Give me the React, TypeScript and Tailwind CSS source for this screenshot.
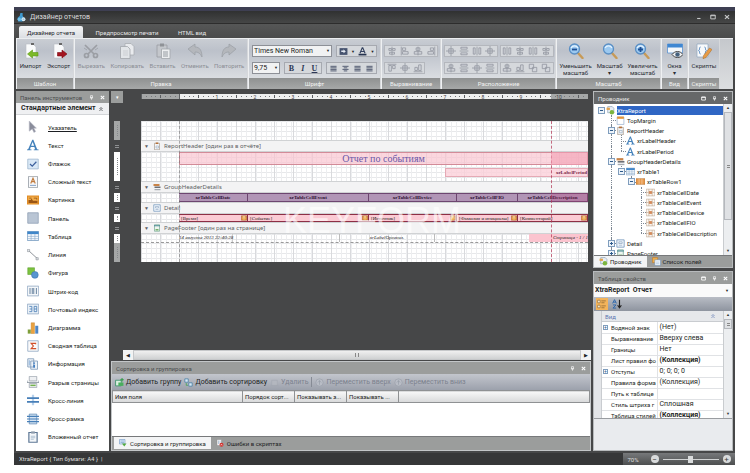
import { useState } from "react";
import type { ReactNode } from "react";
import clsx from "clsx";

type IconProps = { name: string; className?: string };

function Icon({ name, className = "h-4 w-4" }: IconProps) {
  return (
    <svg viewBox="0 0 16 16" className={clsx("shrink-0", className)} aria-hidden="true">
      {icons[name]}
    </svg>
  );
}

const page = <path d="M3 1h7l3 3v11H3z" fill="#fafbfc" stroke="#b9bdc2" strokeWidth=".6" />;
const lens = (
  <>
    <path d="M10 10l4.500 5" stroke="#c79a57" strokeWidth="2.400" strokeLinecap="round" />
    <circle cx="6.500" cy="6" r="5" fill="#9cc9f0" stroke="#5a8fc4" strokeWidth="1.300" />
    <path d="M3 5a4 4 0 0 1 7 0" fill="none" stroke="#e4f3ff" strokeWidth="1.300" />
  </>
);

const icons: Record<string, ReactNode> = {
  app: (
    <>
      <path d="M6 0h4v5l2 3-2 7H2L1 9l4-4z" fill="#3f9ad0" />
      <circle cx="4" cy="11" r="3" fill="#6fc0e8" />
      <circle cx="11.500" cy="11" r="3.500" fill="#d8eaf4" />
      <path d="M10 11h3" stroke="#4a89b0" />
    </>
  ),
  import: (
    <>
      {page}
      <path d="M8 0h3v2H8z" fill="#666" />
      <path d="M4.500 11l5-4v2.500H15v3.500H9.500V15z" fill="#7cb928" stroke="#5d9718" strokeWidth=".6" />
    </>
  ),
  export: (
    <>
      {page}
      <path d="M8 0h3v2H8z" fill="#666" />
      <path d="M16 11l-5-4v2.500H6.500v3.500H11V15z" fill="#a3151f" stroke="#7a0c14" strokeWidth=".6" />
    </>
  ),
  cut: (
    <g fill="none" stroke="#9b9ea4" strokeWidth="1.700">
      <path d="M2 2l9 9M14 2L5 11" />
      <circle cx="3.500" cy="12.500" r="2" />
      <circle cx="12.500" cy="12.500" r="2" />
      <path d="M1 5l3 2M15 5l-3 2" strokeWidth=".8" />
    </g>
  ),
  copy: (
    <>
      <path d="M6 .5h6l3 3V12H6z" fill="#e9ebee" stroke="#a9adb2" strokeWidth=".8" />
      <path d="M1.500 3.500h7l2.500 2.500v9.500h-9.500z" fill="#e2e5e8" stroke="#a2a6ab" strokeWidth=".8" />
      <path d="M4 8h5M4 10h5M4 12h5" stroke="#c3c6ca" strokeWidth=".7" />
    </>
  ),
  paste: (
    <>
      <path d="M2 2h10v12H2z" fill="#c4c7cc" stroke="#9a9da2" strokeWidth=".8" />
      <path d="M5 .5h4v3H5z" fill="#8f9297" />
      <path d="M6.500 6h8.500v9.500H6.500z" fill="#eceef0" stroke="#a2a6ab" strokeWidth=".8" />
      <path d="M8 9h5M8 11h5M8 13h5" stroke="#8d9197" strokeWidth=".9" />
    </>
  ),
  undo: <path d="M1 6l7-5v3c5 0 7 4 7 10-2-4-4-5-7-5v3z" fill="#b4b7bc" stroke="#9a9da3" strokeWidth=".7" />,
  redo: <path d="M15 6L8 1v3C3 4 1 8 1 14c2-4 4-5 7-5v3z" fill="#b4b7bc" stroke="#9a9da3" strokeWidth=".7" />,
  zoomOut: (
    <>
      {lens}
      <path d="M4 6.500h5" stroke="#1d4f94" strokeWidth="1.800" />
    </>
  ),
  zoom: lens,
  zoomIn: (
    <>
      {lens}
      <path d="M4 6.500h5M6.500 4v5" stroke="#1d4f94" strokeWidth="1.800" />
    </>
  ),
  windows: (
    <>
      <path d="M.5 1h15v9H.5z" fill="#f3f7fb" stroke="#5b92cf" strokeWidth=".8" />
      <path d="M.5 1h15v3.500H.5z" fill="#3f87d2" />
      <path d="M5 11.500c3-4 8-4 11 0-3 4-8 4-11 0z" fill="#eef0f2" stroke="#444" strokeWidth="1" />
      <circle cx="10.500" cy="11.500" r="2.200" fill="#45617e" />
    </>
  ),
  scripts: (
    <>
      <path d="M1 1h11v13H1z" fill="#f7f9fb" stroke="#8fa7bf" strokeWidth=".7" />
      <path d="M4.500 4C3 4 4 7 2.700 7.500 4 8 3 11 4.500 11M8.500 4c1.500 0 .5 3 1.800 3.500C9 8 10 11 8.500 11" fill="none" stroke="#3f77b5" strokeWidth=".9" />
      <path d="M13.500 5l2.500 1.500-6 8-3 1.200.4-3z" fill="#e79b46" stroke="#a96d27" strokeWidth=".5" />
    </>
  ),
  pointer: <path d="M3 0l9.500 9.500H9l2.500 4.500-2.300 1.200L7 10.500l-4 3z" fill="#8a8d9b" stroke="#b9bbc6" strokeWidth=".8" />,
  text: <path d="M0 15v-1l1.500-.5L7 1h1.500l5 12.500 2 .5v1H9v-1l1.800-.5-1-3H5l-1 3 2 .5v1zM5.500 9h4L7.500 4z" fill="#4582bb" />,
  check: (
    <>
      <path d="M1 1.500h14v13H1z" fill="#d9e8f6" stroke="#9ab3cc" />
      <path d="M4 8l3 3 5.500-6" fill="none" stroke="#3c5f9c" strokeWidth="1.600" />
    </>
  ),
  rich: (
    <>
      <path d="M2 .5h12v15H2z" fill="#f8f9fb" stroke="#8e959e" />
      <path d="M5 10l3-7 3 7M6 7.500h4" fill="none" stroke="#c07a3c" strokeWidth="1.500" />
      <path d="M4 12.500h8" stroke="#5c86b5" />
    </>
  ),
  picture: (
    <>
      <path d="M0 2h16v12H0z" fill="#e08c26" />
      <path d="M1.500 3.500h13v9h-13z" fill="#f3ad4a" />
      <path d="M2 8h3l1-2 2 3h6v3H2z" fill="#9a5514" />
      <path d="M3 5.500h3M9 5.500h4v2" fill="none" stroke="#8e4c10" />
    </>
  ),
  panel: <path d="M1 1h14v14H1z" fill="#b9c5d4" stroke="#8b9cb1" />,
  table: (
    <>
      <path d="M.5 2h15v12H.5z" fill="#f7fafd" stroke="#6f96bd" />
      <path d="M.5 2h15v3.500H.5z" fill="#3f86c9" />
      <path d="M5.500 5v9M10.500 5v9M.5 8.500h15M.5 11.500h15" stroke="#86a8ca" strokeWidth=".8" />
    </>
  ),
  line: (
    <>
      <path d="M2 2l12 11" stroke="#6d737b" />
      <path d="M.5.5h3v3h-3zM12 11.500h3v3h-3z" fill="#e3e6ea" stroke="#80868e" strokeWidth=".7" />
    </>
  ),
  shape: (
    <>
      <path d="M1 1h9v9H1z" fill="#7cc23f" stroke="#58992a" strokeWidth=".7" />
      <circle cx="10.500" cy="10.500" r="4.500" fill="#5895cf" stroke="#3a72aa" strokeWidth=".7" />
    </>
  ),
  barcode: (
    <>
      <path d="M.5 1.500h15v13H.5z" fill="#f4f7fa" stroke="#8aa3bf" />
      <path d="M4 4v8M7 4v8M9 4v8M12.500 4v8" stroke="#5a7796" strokeWidth="1.200" />
    </>
  ),
  zip: (
    <>
      <path d="M.5 1.500h15v13H.5z" fill="#eaf1f8" stroke="#8aa3bf" />
      <path d="M3 4.500h3.500v7H3M3.500 8h3M9.500 4.500H13v7H9.500zM9.500 8H13" fill="none" stroke="#4a7db5" strokeWidth="1.100" />
    </>
  ),
  chart: (
    <>
      <path d="M1 10h4v5.500H1z" fill="#7e9e3a" />
      <path d="M5.500 1h4.500v14.500H5.500z" fill="#eaa240" stroke="#bd7a20" strokeWidth=".5" />
      <path d="M11 5h4v10.500h-4z" fill="#4f86c4" />
    </>
  ),
  pivot: (
    <>
      <path d="M1 1h14v14H1z" fill="#fafafa" stroke="#8aa3bf" />
      <path d="M11.500 5.500v-1h-6L8.500 8l-3 3.500h6v-1" fill="none" stroke="#d2502a" strokeWidth="1.500" />
    </>
  ),
  info: (
    <>
      <path d="M1 1h8v11H1zM5 4h9v11H5z" fill="#eef3f8" stroke="#7593b3" />
      <path d="M9.500 6v1.500M9.500 9v4" stroke="#2f72bd" strokeWidth="2" />
      <path d="M3 3v7" stroke="#6a9bd0" />
    </>
  ),
  pageBreak: (
    <>
      <path d="M3 .5h10v6H3zM3 10h10v5.500H3z" fill="#eef0f3" stroke="#9ba3ac" />
      <path d="M0 6v2.500h16V6" fill="none" stroke="#6a7785" />
      <path d="M4.500 12.500h7" stroke="#73b24c" strokeWidth="2" />
    </>
  ),
  crossLine: (
    <>
      <path d="M6.500 1h3v14h-3z" fill="#b8d2ec" />
      <path d="M0 5.500h16M0 10.500h16" stroke="#477fb8" strokeWidth="2.200" />
    </>
  ),
  crossBox: (
    <>
      <path d="M3 1.500h10v13H3z" fill="#d6e4f2" stroke="#5c88b4" />
      <path d="M0 4.500h16M0 8h16M0 11.500h16" stroke="#477fb8" strokeWidth="1.600" />
    </>
  ),
  subreport: (
    <>
      <path d="M2.500 2h11v13h-11z" fill="#f4f7fa" stroke="#5d7795" strokeWidth="1.600" />
      <path d="M5.500.5h5v3h-5z" fill="#8e9cac" />
      <path d="M5 7h6M5 9h6M5 11h4" stroke="#9db1c6" />
    </>
  ),
  band: (
    <>
      <path d="M3 2.500h10v13H3z" fill="#f3f5f7" stroke="#8d7a66" />
      <path d="M5.500 1h5v3h-5z" fill="#b56f37" />
      <path d="M6 8h5v4H6z" fill="none" stroke="#8aa0b8" />
    </>
  ),
  group: (
    <>
      <path d="M1 2h12v4H1z" fill="#c98347" />
      <path d="M3 7h12v3H3z" fill="#6c6f74" />
      <path d="M3 12h12v2.500H3z" fill="#a5aab1" />
    </>
  ),
  detail: (
    <>
      <path d="M1.500 1.500h13v13h-13z" fill="#f3f8fd" stroke="#6f93ba" strokeWidth="1.400" />
      <path d="M5 5h6v3H5zM5 11h6" fill="none" stroke="#7593b3" />
    </>
  ),
  footer: (
    <>
      <path d="M3 1.500h10v13H3z" fill="#eef5f0" stroke="#5f9a84" strokeWidth="1.200" />
      <path d="M2 3.500h12" stroke="#4a8b94" strokeWidth="2" />
      <path d="M5 10h6v3H5z" fill="#77b06c" />
    </>
  ),
  margin: (
    <>
      <path d="M2 2h12v13H2z" fill="#fff" stroke="#7d9cc0" />
      <path d="M2 1h12v4H2z" fill="#e39339" />
    </>
  ),
  row: (
    <>
      <path d="M0 3h16v10H0z" fill="#e89b4f" stroke="#b16b27" />
      <path d="M5.500 3v10M10.500 3v10" stroke="#fbe1c2" />
    </>
  ),
  cell: (
    <>
      <path d="M.5 2h15v12H.5z" fill="#fbf6f1" stroke="#b9a18a" />
      <path d="M5 5.500h6v5H5z" fill="#d58a5a" />
      <path d="M.5 8h4M11.500 8h4M5 2v12M11 2v12" stroke="#b9a18a" />
    </>
  ),
  report: (
    <>
      <path d="M3 1h8l3 3v8H3z" fill="#e8eef5" stroke="#7892ad" />
      <path d="M1 3h6v4H1z" fill="#e2a34c" />
      <circle cx="10.500" cy="11" r="4" fill="#7cb53e" />
    </>
  ),
  fields: (
    <>
      <path d="M1 1h9v9H1z" fill="#f0b04c" stroke="#c07a20" />
      <path d="M5 5h10v10H5z" fill="#f7fafd" stroke="#6f93ba" />
      <path d="M7 9h6M7 12h6" stroke="#86a8ca" />
    </>
  ),
  addGroup: (
    <>
      <path d="M1 4h10v10H1z" fill="#d9f0e0" stroke="#3b8f6a" strokeWidth="1.500" />
      <path d="M6 8h9v6H6z" fill="#49ae5e" />
      <path d="M12.500 0v6M9.500 3h6" stroke="#2f9a44" strokeWidth="1.800" />
    </>
  ),
  addSort: (
    <>
      <path d="M1.500 1.500h6v6h-6zM8.500 8.500h6v6h-6z" fill="#d6e9f6" stroke="#3f789f" strokeWidth="1.300" />
      <path d="M4 9v4h3" fill="none" stroke="#48a658" strokeWidth="1.500" />
    </>
  ),
  remove: <path d="M3 4h10v9H3zM1 14h14" fill="#b3b7bf" stroke="#a2a7b0" />,
  circle: (
    <>
      <circle cx="8" cy="8" r="6.500" fill="#b9bdc6" stroke="#989da7" />
      <path d="M8 4v8M5 8l3-3 3 3" fill="none" stroke="#8f95a0" />
    </>
  ),
  sortTab: (
    <>
      <path d="M1 1h11v9H1z" fill="#d8e8f8" stroke="#5a87b8" />
      <path d="M3 4h7M3 7h7" stroke="#5a87b8" />
      <path d="M6 9h9l-4.500 6z" fill="#52aa3e" />
    </>
  ),
  errorTab: (
    <>
      <path d="M2 1h9v12H2z" fill="#f7f7f7" stroke="#8d8d8d" />
      <path d="M5 3v7M8 3v7" stroke="#7c9cc0" />
      <circle cx="11" cy="11.500" r="4" fill="#d2322d" />
      <path d="M9.500 10l3 3M12.500 10l-3 3" stroke="#fff" />
    </>
  ),
  categories: (
    <>
      <path d="M1 2h4v4H1zM1 10h4v4H1z" fill="#fdf3dc" stroke="#8a6532" />
      <path d="M7 3h7M7 6h5M7 11h7M7 14h5" stroke="#8a6532" strokeWidth="1.200" />
    </>
  ),
  sortAz: (
    <>
      <path d="M1 7l3-6 3 6M2 5h4M1.500 9.500h5l-5 5h5" fill="none" stroke="#2c66ad" strokeWidth="1.500" />
      <path d="M12 1v12M9 10l3 4 3-4" fill="none" stroke="#222" strokeWidth="1.800" />
    </>
  ),
  db: (
    <>
      <path d="M1 2h14v12H1z" fill="#d88a35" stroke="#8b4a18" />
      <ellipse cx="8" cy="5" rx="4.500" ry="2" fill="#fbe3b4" />
      <path d="M3.500 7v4c2 2 7 2 9 0V7" fill="#f0b765" />
    </>
  ),
  fill: (
    <>
      <path d="M1 2h14v12H1z" fill="#46536f" />
      <path d="M4 9V6h4V4l4 4-4 3V9z" fill="#e4e9f2" />
    </>
  ),
  fontColor: (
    <>
      <path d="M3.500 11L7.500 1.500h1l4 9.500M5 8h6" fill="none" stroke="#33415f" strokeWidth="2" />
      <path d="M1 13.500h14" stroke="#26334f" strokeWidth="3" />
    </>
  ),
  lines: <path d="M1 3h14M1 6.500h14M1 10h14M1 13.500h14" stroke="#3c4660" strokeWidth="1.900" />,
  linesCenter: <path d="M1 3h14M4 6.500h8M1 10h14M4 13.500h8" stroke="#3c4660" strokeWidth="1.900" />,
  alignA: <path d="M8 1v14M3 4h4v3H3zM9 4h4v3H9zM4 10h8v3H4z" fill="none" stroke="#9396a0" strokeWidth="1.300" />,
  alignB: <path d="M2 1v14M4 3h5v4H4zM4 9h9v4H4z" fill="#d3d6dc" stroke="#9396a0" strokeWidth="1.300" />,
  alignC: <path d="M8 1v14M5 3h6v4H5zM2 9h12v4H2z" fill="#d3d6dc" stroke="#9396a0" strokeWidth="1.300" />,
  alignD: <path d="M14 1v14M7 3h5v4H7zM3 9h9v4H3z" fill="#d3d6dc" stroke="#9396a0" strokeWidth="1.300" />,
  alignTop: <path d="M1 2h14M3 4h4v9H3zM9 4h4v5H9z" fill="#d3d6dc" stroke="#9396a0" strokeWidth="1.300" />,
  alignBottom: <path d="M1 14h14M3 7h4v5H3zM9 3h4v9H9z" fill="#d3d6dc" stroke="#9396a0" strokeWidth="1.300" />,
  center: <path d="M8 0v16M0 8h16M4.500 4.500h7v7h-7z" fill="#d3d6dc" stroke="#9396a0" strokeWidth="1.300" />,
  spaceH: <path d="M2 3h3v10H2zM11 3h3v10h-3zM8 1v14" fill="#d3d6dc" stroke="#9396a0" strokeWidth="1.300" />,
  spaceV: <path d="M3 2h10v3H3zM3 11h10v3H3zM1 8h14" fill="#d3d6dc" stroke="#9396a0" strokeWidth="1.300" />,
  layers: <path d="M2 2h7v7H2zM7 7h7v7H7z" fill="#d3d6dc" stroke="#9396a0" strokeWidth="1.300" />,
  pin: <path d="M5 2h6v7H5zM3 9h10M8 9v6" fill="none" stroke="currentColor" strokeWidth="2" />,
  close: <path d="M2.500 3l11 10M13.500 3l-11 10" stroke="currentColor" strokeWidth="3.400" />,
  max: <path d="M2 3h12v10H2zM2 4.500h12" fill="none" stroke="currentColor" strokeWidth="2.600" />,
  min: <path d="M3 12h9" stroke="currentColor" strokeWidth="3" />,
  collapse: <path d="M4 8l4-4 4 4M4 13l4-4 4 4" fill="none" stroke="currentColor" strokeWidth="1.800" />,
};

const tools = [
  ["pointer", "Указатель"],
  ["text", "Текст"],
  ["check", "Флажок"],
  ["rich", "Сложный текст"],
  ["picture", "Картинка"],
  ["panel", "Панель"],
  ["table", "Таблица"],
  ["line", "Линия"],
  ["shape", "Фигура"],
  ["barcode", "Штрих-код"],
  ["zip", "Почтовый индекс"],
  ["chart", "Диаграмма"],
  ["pivot", "Сводная таблица"],
  ["info", "Информация"],
  ["pageBreak", "Разрыв страницы"],
  ["crossLine", "Кросс-линия"],
  ["crossBox", "Кросс-рамка"],
  ["subreport", "Вложенный отчет"],
];

// guides: v = line, t = branch, e = last branch, m = minus box, n = last minus box,
// p = plus box, r = root box, s = space
const tree = [
  { guides: "r", icon: "report", label: "XtraReport" },
  { guides: "st", icon: "margin", label: "TopMargin" },
  { guides: "sm", icon: "band", label: "ReportHeader" },
  { guides: "svt", icon: "text", label: "xrLabelHeader" },
  { guides: "sve", icon: "text", label: "xrLabelPeriod" },
  { guides: "sm", icon: "group", label: "GroupHeaderDetails" },
  { guides: "svn", icon: "table", label: "xrTable1" },
  { guides: "svsn", icon: "row", label: "xrTableRow1" },
  { guides: "svsst", icon: "cell", label: "xrTableCellDate" },
  { guides: "svsst", icon: "cell", label: "xrTableCellEvent" },
  { guides: "svsst", icon: "cell", label: "xrTableCellDevice" },
  { guides: "svsst", icon: "cell", label: "xrTableCellFIO" },
  { guides: "svsse", icon: "cell", label: "xrTableCellDescription" },
  { guides: "sp", icon: "detail", label: "Detail" },
  { guides: "sp", icon: "footer", label: "PageFooter" },
];

const properties = [
  { name: "Водяной знак", value: "(Нет)", expand: true },
  { name: "Выравнивание", value: "Вверху слева" },
  { name: "Границы", value: "Нет" },
  { name: "Лист правил фо", value: "(Коллекция)", bold: true },
  { name: "Отступы", value: "0; 0; 0; 0", expand: true },
  { name: "Правила форма", value: "(Коллекция)" },
  { name: "Путь к таблице", value: "" },
  { name: "Стиль штриха г", value: "Сплошная" },
  { name: "Таблица стилей", value: "(Коллекция)", bold: true },
];

function RibbonGroup({ title, className, children }: { title: string; className?: string; children: ReactNode }) {
  return (
    <section className={clsx("flex flex-col border-x border-l-[#eef0f2] border-r-[#d6d8db]", className)}>
      <div className="flex flex-1 justify-around bg-linear-to-b from-[#c9cdd3] via-[#bcc1ca] via-30% to-[#dadde1] pt-1">
        {children}
      </div>
      <h2 className="h-[11px] overflow-hidden bg-linear-to-b from-[#8f9191] to-[#a6a8a8] text-center leading-[11px] text-[#f2f2f2]">
        {title}
      </h2>
    </section>
  );
}

function BigButton({ icon, label, disabled }: { icon: string; label: string; disabled?: boolean }) {
  return (
    <button
      disabled={disabled}
      className={clsx("flex flex-col items-center gap-[3px] text-center leading-[7px]", disabled ? "text-[#8b8e95]" : "text-[#2a2d33]")}
    >
      <Icon name={icon} className="h-4 w-4" />
      <span className="whitespace-pre">{label}</span>
    </button>
  );
}

function IconStrip({ names }: { names: string[] }) {
  return (
    <div className="flex h-3 items-center border border-[#b4b7bd] bg-[#d5d8dc]">
      {names.map((name, i) => (
        <button key={i} aria-label={name} className="flex w-[13px] justify-center">
          <Icon name={name} className="h-2.5 w-2.5" />
        </button>
      ))}
    </div>
  );
}

function Combo({ label, value, className }: { label: string; value: string; className: string }) {
  return (
    <div className={clsx("relative h-3", className)}>
      <select
        aria-label={label}
        className="h-full w-full appearance-none border border-[#8d9097] bg-[#f1f2f3] pl-px text-[7px] leading-[9px]"
      >
        <option>{value}</option>
      </select>
      <span className="pointer-events-none absolute top-px right-0.5 text-[4px]">▼</span>
    </div>
  );
}

function PanelTitle({ title, active, buttons }: { title: string; active?: boolean; buttons: string[] }) {
  return (
    <header
      className={clsx(
        "flex h-3 shrink-0 items-center gap-1.5 px-1",
        active ? "bg-[#666869] text-[#e8e8e8]" : "bg-[#9b9d9c] text-[#4a4c4e]"
      )}
    >
      <h2 className="flex-1 whitespace-nowrap">{title}</h2>
      {buttons.map((b) => (
        <button key={b} aria-label={b} className="text-white">
          <Icon name={b} className="h-[5px] w-[5px]" />
        </button>
      ))}
    </header>
  );
}

function Guide({ kind }: { kind: string }) {
  const boxed = "mnpr".includes(kind);
  const hasLine = !"sr".includes(kind);
  return (
    <span className="relative h-full w-[10px] shrink-0">
      {hasLine && (
        <span
          className={clsx(
            "absolute top-0 left-[5px] border-l border-dotted border-[#7d8894]",
            "en".includes(kind) ? "h-1/2" : "h-full"
          )}
        />
      )}
      {hasLine && kind !== "v" && (
        <span className="absolute top-1/2 left-[5px] w-[5px] border-t border-dotted border-[#7d8894]" />
      )}
      {boxed && (
        <span className="absolute top-[2px] left-[2px] flex h-[7px] w-[7px] items-center justify-center border border-[#7f9dbd] bg-[#eef4fa]">
          <span className="h-px w-[3px] bg-[#2d5b8c]" />
          {kind === "p" && <span className="absolute h-[3px] w-px bg-[#2d5b8c]" />}
        </span>
      )}
    </span>
  );
}

function Scrollbar({ thumb }: { thumb: string }) {
  return (
    <div className="flex w-[9px] shrink-0 flex-col items-center border-l border-[#c9cccf] bg-[#eceef0] text-[4px] leading-[8px] text-[#333]">
      <span>▲</span>
      <div className="w-full flex-1">
        <div className={clsx("flex w-full items-center justify-center border border-[#b5b8bd] bg-[#dfe1e4]", thumb)}>
          <span className="h-[3px] w-[3px] border-y border-[#888]" />
        </div>
      </div>
      <span>▼</span>
    </div>
  );
}

function Ruler() {
  const inches = Array.from({ length: 12 }, (_, i) => i);
  return (
    <div className="h-[5px] overflow-hidden bg-[#eeefef]">
      <svg viewBox="0 0 447 5" className="h-[5px] w-[447px]">
        <path d="M0 0h38v5H0zM410 0h37v5h-37z" fill="#a5a7a7" />
        {inches.map((i) => (
          <g key={i}>
            {[5, 10, 14, 24, 29, 34].map((d) => (
              <path key={d} d={`M${i * 38 + d} 2h1v1h-1z`} fill="#75787b" />
            ))}
            <path d={`M${i * 38 + 19} 1h1v3h-1z`} fill="#5c5f62" />
            {i > 1 ? (
              <text x={i * 38} y="4.500" fontSize="5" textAnchor="middle" fill="#3f4245">
                {i - 1}
              </text>
            ) : (
              <path d={`M${i * 38} 0h1v5h-1z`} fill="#5c5f62" />
            )}
          </g>
        ))}
      </svg>
    </div>
  );
}

function VerticalRuler() {
  const parts = [
    { h: "h-[19px]", bg: "bg-[#a5a7a7]" },
    { h: "h-[12px]", bg: "" },
    { h: "h-[29px]", bg: "bg-white" },
    { h: "h-[12px]", bg: "" },
    { h: "h-[9px]", bg: "bg-white" },
    { h: "h-[12px]", bg: "" },
    { h: "h-[8px]", bg: "bg-white" },
    { h: "h-[12px]", bg: "" },
    { h: "h-[9px]", bg: "bg-white" },
    { h: "h-[19px]", bg: "bg-[#a5a7a7]" },
  ];
  return (
    <div className="mt-[18px] ml-[3px] w-1.5">
      {parts.map((p, i) => (
        <div key={i} className={clsx("flex flex-col items-center justify-evenly", p.h, p.bg)}>
          {p.bg ? (
            <span className="h-3/5 border-l border-dotted border-[#85888b]" />
          ) : (
            <span className="h-[3px] w-1 border-y border-[#8e9092]" />
          )}
        </div>
      ))}
    </div>
  );
}

function Band({ icon, title }: { icon: string; title: string }) {
  return (
    <div className="flex h-3 items-center gap-[3px] border-y border-[#d0d2d4] bg-[#f3f3f4] pl-[3px] font-['Noto_Sans',sans-serif] text-[6px] text-[#5d5f63]">
      <span className="w-1.5 text-[5px]">▼</span>
      <Icon name={icon} className="h-2 w-2" />
      <span className="whitespace-nowrap">{title}</span>
    </div>
  );
}

const grid =
  "bg-white bg-[linear-gradient(to_right,#d9dadd_1px,transparent_1px),linear-gradient(to_right,#edeef0_1px,transparent_1px),linear-gradient(to_bottom,#e7e8ea_1px,transparent_1px)] bg-[size:19px_19px,5px_5px,5px_5px]";

const cells = [
  { w: "w-[69px]", head: "xrTableCellDate", field: "[Время]" },
  { w: "w-[121px]", head: "xrTableCellEvent", field: "[Событие]" },
  { w: "w-[88px]", head: "xrTableCellDevice", field: "[Источник]" },
  { w: "w-[61px]", head: "xrTableCellFIO", field: "[Фамилия и инициалы]" },
  { w: "flex-1", head: "xrTableCellDescription", field: "[Комментарий]" },
];

function Report() {
  return (
    <div className="relative mt-[22px] overflow-hidden bg-white font-['Liberation_Serif',serif] text-[5px] leading-[7px] text-[#222]">
      <div className={clsx("h-[19px]", grid)} />
      <Band icon="band" title="ReportHeader [один раз в отчёте]" />
      <div className={clsx("flex h-[29px] flex-col items-end gap-[3px] pl-[38px]", grid)}>
        <div className="h-[13px] w-full border border-[#d28b98] bg-[#f9c4d0]/70 text-center text-[10px] leading-[11px] text-[#6a58a8]">
          Отчет по событиям
        </div>
        <div className="h-[9px] w-[143px] border border-[#e5a9b5] bg-[#fbd0d9]/80 text-right font-bold text-[#7a2a48]">
          xrLabelPeriod
        </div>
      </div>
      <Band icon="group" title="GroupHeaderDetails" />
      <div className={clsx("flex h-[9px] pl-[38px]", grid)}>
        {cells.map((c) => (
          <div key={c.head} className={clsx("border-y border-r border-[#6d4670] bg-[#b195b6] text-center font-bold text-[#2a0c2e]", c.w)}>
            {c.head}
          </div>
        ))}
      </div>
      <Band icon="detail" title="Detail" />
      <div className={clsx("flex h-2 pl-[38px]", grid)}>
        {cells.map((c) => (
          <div
            key={c.head}
            className={clsx("flex items-center justify-between border-y border-r border-[#8d2f45] bg-[#fbcbd4] pl-0.5", c.w)}
          >
            <span className="whitespace-nowrap">{c.field}</span>
            <Icon name="db" className="h-1.5 w-1.5" />
          </div>
        ))}
      </div>
      <Band icon="footer" title="PageFooter [один раз на странице]" />
      <div className={clsx("flex h-[9px] justify-between border-b border-dashed border-b-[#999] pl-[38px] italic", grid)}>
        <div className="w-[54px] border-r border-[#ccc] whitespace-nowrap">14 августа 2013 22:40:28</div>
        <div className="ml-[12px] w-[96px] border-x border-[#bbb] text-center">xrLabelОрганиз.</div>
        <div className="w-[59px] bg-[#fbc4cf] text-right">Страница - 1 / 1</div>
      </div>
      <div className={clsx("h-[19px]", grid)} />
      {/* page margins */}
      <div className="absolute inset-y-0 left-[38px] border-l border-dashed border-[#777]/60" />
      <div className="absolute inset-y-0 right-0 w-[37px] border-l border-dashed border-[#b03050]/70" />
      <div className="absolute top-[31px] right-0 h-[13px] w-[37px] bg-[#f3a0b4]/60" />
      <div className="absolute top-[72px] right-0 h-[9px] w-[37px] bg-[#c04078]/25" />
      <div className="absolute top-[80px] left-[142px] font-[Liberation_Sans,sans-serif] text-[36px] leading-10 text-white/60">
        KEYFORM
      </div>
    </div>
  );
}

export default function App() {
  const [tool, setTool] = useState("Указатель");
  const [zoom, setZoom] = useState(50);

  return (
    <div className="h-screen bg-white pt-[7px] pr-[15px] pb-2 pl-[14px] font-[Roboto,sans-serif] text-[6px] leading-[9px] text-[#1d1f23]">
      <div className="flex h-full flex-col overflow-hidden bg-[#464748]">
        <header className="flex h-[17px] shrink-0 items-center gap-1 border-t-4 border-b border-t-[#3e3f52] border-b-[#2d2d2d] bg-linear-to-b from-[#303131] to-[#464747] pr-1 pl-[3px] text-[7px] text-[#dcdcdc]">
          <Icon name="app" className="h-[9px] w-[9px]" />
          <h1 className="flex-1">Дизайнер отчетов</h1>
          <div className="flex gap-2 pr-px text-[#c5c7c8]">
            {["min", "max", "close"].map((b) => (
              <button key={b} aria-label={b}>
                <Icon name={b} className="h-1.5 w-1.5" />
              </button>
            ))}
          </div>
        </header>

        <nav className="flex h-[14px] shrink-0 items-end gap-[12px] bg-linear-to-b from-[#565757] to-[#4a4b4b] pl-[5px] text-[#e6e6e6]">
          <button className="h-3 w-[64px] rounded-t-xs bg-linear-to-b from-[#f4f5f6] to-[#dcdfe3] text-[#24262b]">Дизайнер отчета</button>
          <button className="h-3 w-[64px] whitespace-nowrap">Предпросмотр печати</button>
          <button className="h-3 w-[42px]">HTML вид</button>
        </nav>

        <div className="mx-[2px] flex h-[51px] shrink-0 border-t border-[#eceef0] bg-linear-to-b from-[#c5c8cc] to-[#dcdee0]">
          <RibbonGroup title="Шаблон" className="w-[58px]">
            <BigButton icon="import" label="Импорт" />
            <BigButton icon="export" label="Экспорт" />
          </RibbonGroup>
          <RibbonGroup title="Правка" className="w-[174px]">
            <BigButton icon="cut" label="Вырезать" disabled />
            <BigButton icon="copy" label="Копировать" disabled />
            <BigButton icon="paste" label="Вставить" disabled />
            <BigButton icon="undo" label="Отменить" disabled />
            <BigButton icon="redo" label="Повторить" disabled />
          </RibbonGroup>
          <RibbonGroup title="Шрифт" className="w-[133px]">
            <div className="flex w-full flex-col gap-[5px] px-[3px] pt-0.5">
              <div className="flex gap-1">
                <Combo label="Шрифт" value="Times New Roman" className="w-[80px]" />
                <div className="flex h-3 flex-1 items-center justify-around border border-[#a6a9b0] bg-[#d5d8dc]">
                  <button aria-label="Заливка"><Icon name="fill" className="h-[9px] w-[9px]" /></button>
                  <span className="text-[4px]">▼</span>
                  <button aria-label="Цвет текста"><Icon name="fontColor" className="h-[9px] w-[9px]" /></button>
                  <span className="text-[4px]">▼</span>
                </div>
              </div>
              <div className="flex gap-1">
                <Combo label="Размер" value="9,75" className="w-[28px]" />
                <div className="flex h-3 w-[38px] items-center justify-around border border-[#a6a9b0] bg-[#d5d8dc] font-['Liberation_Serif',serif] text-[8px] font-bold text-[#2c3755]">
                  <button>B</button>
                  <button className="italic">I</button>
                  <button className="underline">U</button>
                </div>
                <div className="flex h-3 flex-1 items-center justify-around border border-[#a6a9b0] bg-[#d5d8dc]">
                  {["lines", "linesCenter", "lines", "lines"].map((n, i) => (
                    <button key={i} aria-label="Выравнивание">
                      <Icon name={n} className="h-[7px] w-[7px]" />
                    </button>
                  ))}
                </div>
              </div>
            </div>
          </RibbonGroup>
          <RibbonGroup title="Выравнивание" className="w-[60px]">
            <div className="flex flex-col items-start gap-[5px] pt-0.5">
              <IconStrip names={["alignA", "alignB", "alignC", "alignD"]} />
              <IconStrip names={["alignTop", "center", "alignBottom"]} />
            </div>
          </RibbonGroup>
          <RibbonGroup title="Расположение" className="w-[115px]">
            <div className="flex flex-col gap-[5px] pt-0.5">
              <div className="flex gap-0.5">
                <IconStrip names={["center", "spaceV", "spaceH", "center"]} />
                <IconStrip names={["spaceH", "alignA", "spaceH", "alignA"]} />
              </div>
              <div className="flex gap-0.5">
                <IconStrip names={["alignC", "spaceV", "center", "spaceV"]} />
                <IconStrip names={["alignC", "alignBottom", "layers", "layers"]} />
              </div>
            </div>
          </RibbonGroup>
          <RibbonGroup title="Масштаб" className="w-[105px]">
            <BigButton icon="zoomOut" label={"Уменьшить\nмасштаб"} />
            <BigButton icon="zoom" label={"Масштаб\n▾"} />
            <BigButton icon="zoomIn" label={"Увеличить\nмасштаб"} />
          </RibbonGroup>
          <RibbonGroup title="Вид" className="w-[27px]">
            <BigButton icon="windows" label={"Окна\n▾"} />
          </RibbonGroup>
          <RibbonGroup title="Скрипты" className="w-[32px]">
            <BigButton icon="scripts" label="Скрипты" />
          </RibbonGroup>
        </div>

        <main className="flex min-h-0 flex-1 gap-0.5 px-[2px] py-0.5">
          <aside className="flex w-[93px] shrink-0 flex-col bg-white">
            <PanelTitle title="Панель инструментов" buttons={["pin", "close"]} />
            <div className="flex h-3 shrink-0 items-center justify-between border-b border-[#d3d5d8] bg-[#eff0f2] px-[5px] text-[7px] font-bold">
              <h3>Стандартные элемент</h3>
              <Icon name="collapse" className="h-1.5 w-1.5" />
            </div>
            <ul className="flex flex-1 flex-col pt-[3px] pb-[5px]">
              {tools.map(([icon, label]) => (
                <li key={label} className="flex flex-1">
                  <button onClick={() => setTool(label)} className="flex w-full items-center gap-[9px] pl-[11px] text-left">
                    <Icon name={icon} className="h-3 w-3" />
                    <span className={clsx(label === tool && "underline")}>{label}</span>
                  </button>
                </li>
              ))}
            </ul>
          </aside>

          <div className="flex min-w-0 flex-1 flex-col">
            <div className="flex min-h-0 flex-1">
              <div className="w-[30px] shrink-0">
                <div className="flex h-3 w-3 items-center justify-center bg-[#9b9d9c] text-[5px] text-white">▾</div>
                <VerticalRuler />
              </div>
              <div className="min-w-0 flex-1 pt-[3px] pr-[3px]">
                <Ruler />
                <Report />
              </div>
            </div>

            <div className="mb-px ml-3 flex h-[10px] shrink-0 items-center bg-[#f2f3f3] text-[5px]">
              <span className="w-2.5 text-center">◀</span>
              <div className="flex h-full flex-1 items-center justify-center border border-[#c6c8ca] bg-linear-to-b from-[#f0f0f0] to-[#cfd1d2]">
                <span className="h-1 w-1 border-x border-[#888]" />
              </div>
              <span className="w-2.5 text-center">▶</span>
            </div>

            <section className="flex h-[90px] shrink-0 flex-col border border-[#c3c6c8] bg-[#9b9d9c]">
              <PanelTitle title="Сортировка и группировка" buttons={["pin", "close"]} />
              <div className="flex h-4 shrink-0 items-center gap-[3px] bg-linear-to-b from-[#c3c6cd] to-[#9ca1ac] px-[3px] text-[7px] whitespace-nowrap">
                <button className="flex items-center gap-0.5"><Icon name="addGroup" className="h-[9px] w-[9px]" />Добавить группу</button>
                <button className="flex items-center gap-0.5"><Icon name="addSort" className="h-[9px] w-[9px]" />Добавить сортировку</button>
                <button disabled className="flex items-center gap-0.5 text-[#7d828e]"><Icon name="remove" className="h-[9px] w-[9px]" />Удалить</button>
                <span className="h-2.5 border-l border-[#868b95]" />
                <button disabled className="flex items-center gap-0.5 text-[#7d828e]"><Icon name="circle" className="h-[9px] w-[9px]" />Переместить вверх</button>
                <button disabled className="flex items-center gap-0.5 text-[#7d828e]"><Icon name="circle" className="h-[9px] w-[9px]" />Переместить вниз</button>
              </div>
              <div className="min-h-0 flex-1 border-b border-[#77797b] bg-white">
                <table className="w-full table-fixed border-collapse text-left">
                  <thead>
                    <tr className="h-3 border border-[#8f9193] bg-linear-to-b from-[#f7f7f7] to-[#d9dadb]">
                      <th className="w-[130px] px-0.5 font-normal">Имя поля</th>
                      <th className="w-[52px] border-l border-[#8f9193] px-0.5 font-normal">Порядок сорт...</th>
                      <th className="w-[52px] border-l border-[#8f9193] px-0.5 font-normal">Показывать з...</th>
                      <th className="w-[52px] border-l border-[#8f9193] px-0.5 font-normal">Показывать ...</th>
                      <th className="border-l border-[#8f9193]" />
                    </tr>
                  </thead>
                </table>
              </div>
              <div className="flex h-[13px] shrink-0 pb-px pl-0.5">
                <button className="flex items-center gap-[3px] bg-[#f3f4f5] px-[5px] whitespace-nowrap"><Icon name="sortTab" className="h-2 w-2" />Сортировка и группировка</button>
                <button className="flex items-center gap-[3px] px-[5px] whitespace-nowrap"><Icon name="errorTab" className="h-2 w-2" />Ошибки в скриптах</button>
              </div>
            </section>
          </div>

          <aside className="flex w-[140px] shrink-0 flex-col gap-[3px]">
            <section className="flex h-[177px] flex-col border border-[#b7babc] bg-[#9b9d9c]">
              <PanelTitle active title="Проводник" buttons={["max", "pin", "close"]} />
              <div className="flex min-h-0 flex-1 bg-white">
                <ul className="min-w-0 flex-1 overflow-hidden pt-px pl-0.5">
                  {tree.map((n, i) => (
                    <li key={n.label} className={clsx("flex items-center", i % 4 === 3 ? "h-[11px]" : "h-[10px]")}>
                      {n.guides.split("").map((g, j) => (
                        <Guide key={j} kind={g} />
                      ))}
                      <Icon name={n.icon} className="h-[9px] w-[9px]" />
                      <span className={clsx("ml-0.5 whitespace-nowrap", i === 0 && "flex-1 bg-[#2f66c4] text-white")}>{n.label}</span>
                    </li>
                  ))}
                </ul>
                <Scrollbar thumb="h-4/5" />
              </div>
              <div className="flex h-3 shrink-0 border-t border-[#77797b]">
                <button className="flex items-center gap-0.5 bg-[#f3f4f5] px-[5px]"><Icon name="report" className="h-[9px] w-[9px]" />Проводник</button>
                <button className="flex items-center gap-0.5 px-[5px]"><Icon name="fields" className="h-[9px] w-[9px]" />Список полей</button>
              </div>
            </section>

            <section className="flex min-h-0 flex-1 flex-col border border-[#b7babc] bg-[#e9ebee]">
              <PanelTitle title="Таблица свойств" buttons={["max", "pin", "close"]} />
              <div className="relative h-[13px] shrink-0">
                <select aria-label="Объект" className="h-full w-full appearance-none bg-[#fafafa] pl-px text-[7px] font-bold">
                  <option>XtraReport&nbsp; Отчет</option>
                </select>
                <span className="pointer-events-none absolute top-0.5 right-[3px] text-[4px]">▼</span>
              </div>
              <div className="flex h-[14px] shrink-0 items-center gap-1 bg-linear-to-b from-[#b9bdc5] to-[#8e949f] px-0.5">
                <button aria-label="По категориям" className="bg-[#f3b45b] p-px"><Icon name="categories" className="h-2.5 w-2.5" /></button>
                <button aria-label="По алфавиту"><Icon name="sortAz" className="h-2.5 w-2.5" /></button>
              </div>
              <div className="flex min-h-0 flex-1 border-b border-[#9a9da1] bg-white">
                <div className="w-2 shrink-0 border-r border-[#c9ccd0] bg-[#e3e5e8]" />
                <div className="min-w-0 flex-1 overflow-hidden text-[7px]">
                  <div className="flex h-[11px] items-center justify-between border-b border-[#c9ccd0] bg-[#e6e8eb] px-[3px] text-[6px] text-[#5a75b0]">
                    <span>Вид</span>
                    <Icon name="collapse" className="mr-1 h-1.5 w-1.5" />
                  </div>
                  <table className="w-full table-fixed border-collapse">
                    <tbody>
                      {properties.map((p) => (
                        <tr key={p.name} className="h-[11px] border-b border-[#e0e2e5]">
                          <th className="w-[55px] border-r border-[#e0e2e5] text-left text-[6px] font-normal whitespace-nowrap">
                            <span className="flex items-center gap-[3px] pl-px">
                              <span className={clsx("flex h-[5px] w-[5px] shrink-0 items-center justify-center text-[5px]", p.expand && "border border-[#7f9dbd] text-[#2d5b8c]")}>
                                {p.expand && "+"}
                              </span>
                              {p.name}
                            </span>
                          </th>
                          <td className={clsx("pl-0.5 whitespace-nowrap", p.bold && "font-bold")}>{p.value}</td>
                        </tr>
                      ))}
                    </tbody>
                  </table>
                </div>
                <Scrollbar thumb="h-2.5" />
              </div>
              <div className="h-[31px] shrink-0" />
            </section>
          </aside>
        </main>

        <footer className="flex h-3 shrink-0 items-stretch justify-between bg-[#363738] text-[#dedede]">
          <span className="pt-px pl-[5px]">XtraReport {"{ Тип бумаги: A4 }"} &nbsp;|</span>
          <label className="flex w-[112px] items-center justify-center gap-1 bg-linear-to-b from-[#77797b] to-[#4d4f50]">
            70%
            <span className="ml-2 flex h-2 w-2 items-center justify-center rounded-full bg-[#d9dbdc] text-[8px] text-[#444]">−</span>
            <input
              type="range"
              value={zoom}
              onChange={(e) => setZoom(Number(e.target.value))}
              className="h-2 w-[56px] appearance-none bg-transparent [&::-webkit-slider-runnable-track]:h-px [&::-webkit-slider-runnable-track]:bg-[#d0d2d3] [&::-webkit-slider-thumb]:-mt-[3px] [&::-webkit-slider-thumb]:h-[7px] [&::-webkit-slider-thumb]:w-[5px] [&::-webkit-slider-thumb]:appearance-none [&::-webkit-slider-thumb]:bg-[#d9dbdc]"
            />
            <span className="flex h-2 w-2 items-center justify-center rounded-full bg-[#d9dbdc] text-[8px] text-[#444]">+</span>
          </label>
        </footer>
      </div>
    </div>
  );
}
